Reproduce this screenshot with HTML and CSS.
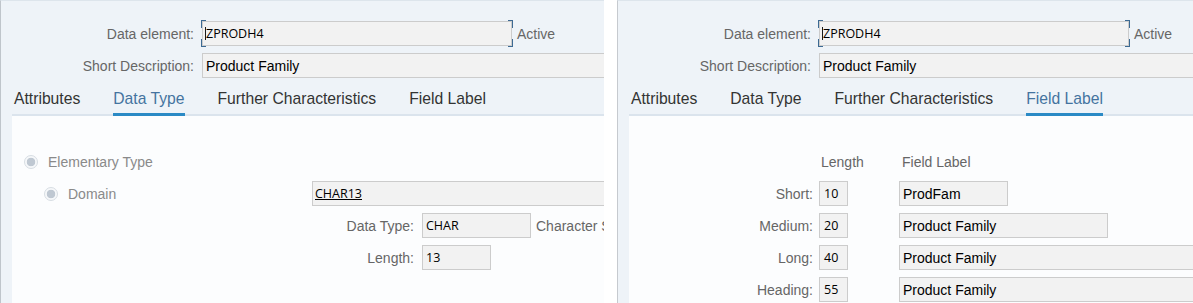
FILE: index.html
```html
<!DOCTYPE html>
<html>
<head>
<meta charset="utf-8">
<link rel="stylesheet" href="styles.css">
</head>
<body>
<div class="panel panel-left">
  <div class="head">
    <div class="row">
      <span class="lbl">Data element:</span>
      <span class="focus"><span class="field field-name mono"><span class="caret"></span>ZPRODH4</span></span>
      <span class="status">Active</span>
    </div>
    <div class="row">
      <span class="lbl">Short Description:</span>
      <span class="field field-desc">Product Family</span>
    </div>
  </div>
  <div class="tabs">
    <span class="tab">Attributes</span>
    <span class="tab active">Data Type</span>
    <span class="tab">Further Characteristics</span>
    <span class="tab">Field Label</span>
  </div>
  <div class="content">
    <div class="row">
      <span class="opt opt-1"><span class="radio"></span><span class="opt-text">Elementary Type</span></span>
    </div>
    <div class="row">
      <span class="opt opt-2"><span class="radio"></span><span class="opt-text">Domain</span></span>
      <span class="field field-domain mono link">CHAR13</span>
    </div>
    <div class="row">
      <span class="lbl lbl-type">Data Type:</span>
      <span class="field field-type mono">CHAR</span>
      <span class="status">Character String</span>
    </div>
    <div class="row">
      <span class="lbl lbl-type">Length:</span>
      <span class="field field-len mono">13</span>
    </div>
  </div>
</div>

<div class="panel panel-right">
  <div class="head">
    <div class="row">
      <span class="lbl">Data element:</span>
      <span class="focus"><span class="field field-name mono"><span class="caret"></span>ZPRODH4</span></span>
      <span class="status">Active</span>
    </div>
    <div class="row">
      <span class="lbl">Short Description:</span>
      <span class="field field-desc">Product Family</span>
    </div>
  </div>
  <div class="tabs">
    <span class="tab">Attributes</span>
    <span class="tab">Data Type</span>
    <span class="tab">Further Characteristics</span>
    <span class="tab active">Field Label</span>
  </div>
  <div class="content">
    <div class="row">
      <span class="lbl lbl-fl"></span>
      <span class="col-head col-len">Length</span>
      <span class="col-head col-fl">Field Label</span>
    </div>
    <div class="row">
      <span class="lbl lbl-fl">Short:</span>
      <span class="field num mono">10</span>
      <span class="field fl fl-s">ProdFam</span>
    </div>
    <div class="row">
      <span class="lbl lbl-fl">Medium:</span>
      <span class="field num mono">20</span>
      <span class="field fl fl-m">Product Family</span>
    </div>
    <div class="row">
      <span class="lbl lbl-fl">Long:</span>
      <span class="field num mono">40</span>
      <span class="field fl fl-l">Product Family</span>
    </div>
    <div class="row">
      <span class="lbl lbl-fl">Heading:</span>
      <span class="field num mono">55</span>
      <span class="field fl fl-l">Product Family</span>
    </div>
  </div>
</div>
</body>
</html>
```

FILE: styles.css
```css
html, body {
  margin: 0;
  padding: 0;
}
body {
  width: 1193px;
  height: 303px;
  overflow: hidden;
  display: flex;
  background: #ffffff;
  font-family: "Liberation Sans", Arial, sans-serif;
  font-size: 14px;
}
.panel {
  height: 303px;
  box-sizing: border-box;
  background: #eef3f8;
  border-left: 1px solid #bfc5cb;
  border-top: 1px solid #dde5ec;
  overflow: hidden;
  display: flex;
  flex-direction: column;
}
.panel-left {
  width: 604px;
  flex: none;
}
.panel-right {
  flex: 1;
  min-width: 0;
  margin-left: 13px;
  border-left-color: #c6cacf;
}
.head {
  padding-top: 20px;
  display: flex;
  flex-direction: column;
  gap: 7px;
}
.row {
  display: flex;
  align-items: center;
  height: 25px;
  white-space: nowrap;
}
.lbl {
  width: 193px;
  flex: none;
  text-align: right;
  color: #666666;
  font-size: 14px;
}
.field {
  height: 25px;
  box-sizing: border-box;
  border: 1px solid #cccccc;
  background: #f2f2f2;
  padding-left: 3px;
  display: flex;
  align-items: center;
  flex: none;
  color: #000000;
  font-size: 14px;
  white-space: nowrap;
  overflow: hidden;
}
.mono {
  font-family: "Open Sans", "Noto Sans", sans-serif;
  font-weight: 500;
  font-size: 12.5px;
}
.link {
  text-decoration: underline;
}
.focus {
  position: relative;
  display: flex;
  margin-left: 8px;
  flex: none;
}
.focus::after {
  content: "";
  position: absolute;
  top: -1px;
  left: -1px;
  right: -1px;
  bottom: -1px;
  pointer-events: none;
  background:
    linear-gradient(#3d6a93, #3d6a93) left top / 1px 8px no-repeat,
    linear-gradient(#3d6a93, #3d6a93) left top / 5px 1px no-repeat,
    linear-gradient(#3d6a93, #3d6a93) left bottom / 1px 8px no-repeat,
    linear-gradient(#3d6a93, #3d6a93) left bottom / 5px 1px no-repeat,
    linear-gradient(#3d6a93, #3d6a93) right top / 1px 8px no-repeat,
    linear-gradient(#3d6a93, #3d6a93) right top / 5px 1px no-repeat,
    linear-gradient(#3d6a93, #3d6a93) right bottom / 1px 8px no-repeat,
    linear-gradient(#3d6a93, #3d6a93) right bottom / 5px 1px no-repeat;
}
.caret {
  display: inline-block;
  width: 1px;
  height: 13px;
  background: #1a1a1a;
  margin-left: -1px;
  margin-right: 0;
}
.field-name {
  width: 310px;
}
.status {
  margin-left: 5px;
  color: #666666;
  font-size: 14px;
}
.field-desc {
  width: 440px;
  margin-left: 8px;
}
.tabs {
  display: flex;
  gap: 33px;
  margin-top: 12px;
  margin-left: 13px;
  margin-bottom: -2px;
  position: relative;
  z-index: 1;
}
.tab {
  font-size: 15.7px;
  line-height: 18px;
  padding-bottom: 5px;
  border-bottom: 3px solid transparent;
  color: #333333;
  white-space: nowrap;
}
.tab.active {
  color: #44739f;
  border-bottom-color: #2b8ac5;
}
.content {
  margin-left: 11px;
  flex: 1;
  background: #fcfdfe;
  border-top: 2px solid #dbe4ed;
  padding-top: 33px;
  display: flex;
  flex-direction: column;
  gap: 7px;
}
.opt {
  display: flex;
  align-items: center;
  gap: 10px;
  color: #8a8a8a;
  font-size: 14px;
}
.opt-1 {
  padding-left: 12px;
}
.opt-2 {
  padding-left: 32px;
  width: 268px;
  flex: none;
}
.radio {
  width: 14px;
  height: 14px;
  box-sizing: border-box;
  border-radius: 50%;
  border: 1px solid #d7dde3;
  background: radial-gradient(circle, #bfc8d2 0, #bfc8d2 4px, #f6f8fa 4.6px);
  flex: none;
}
.field-domain {
  width: 320px;
  padding-left: 2px;
}
.lbl-type {
  width: 402px;
}
.field-type {
  width: 109px;
  margin-left: 8px;
}
.field-len {
  width: 69px;
  margin-left: 8px;
}
.lbl-fl {
  width: 184px;
}
.col-head {
  color: #666666;
  font-size: 14px;
}
.col-len {
  width: 29px;
  margin-left: 6px;
  padding-left: 2px;
  box-sizing: border-box;
  flex: none;
  overflow: visible;
}
.col-fl {
  margin-left: 51px;
  padding-left: 3px;
}
.num {
  width: 29px;
  margin-left: 6px;
  padding-left: 4px;
}
.fl {
  margin-left: 51px;
}
.fl-s {
  width: 109px;
}
.fl-m {
  width: 209px;
}
.fl-l {
  width: 400px;
}
```
